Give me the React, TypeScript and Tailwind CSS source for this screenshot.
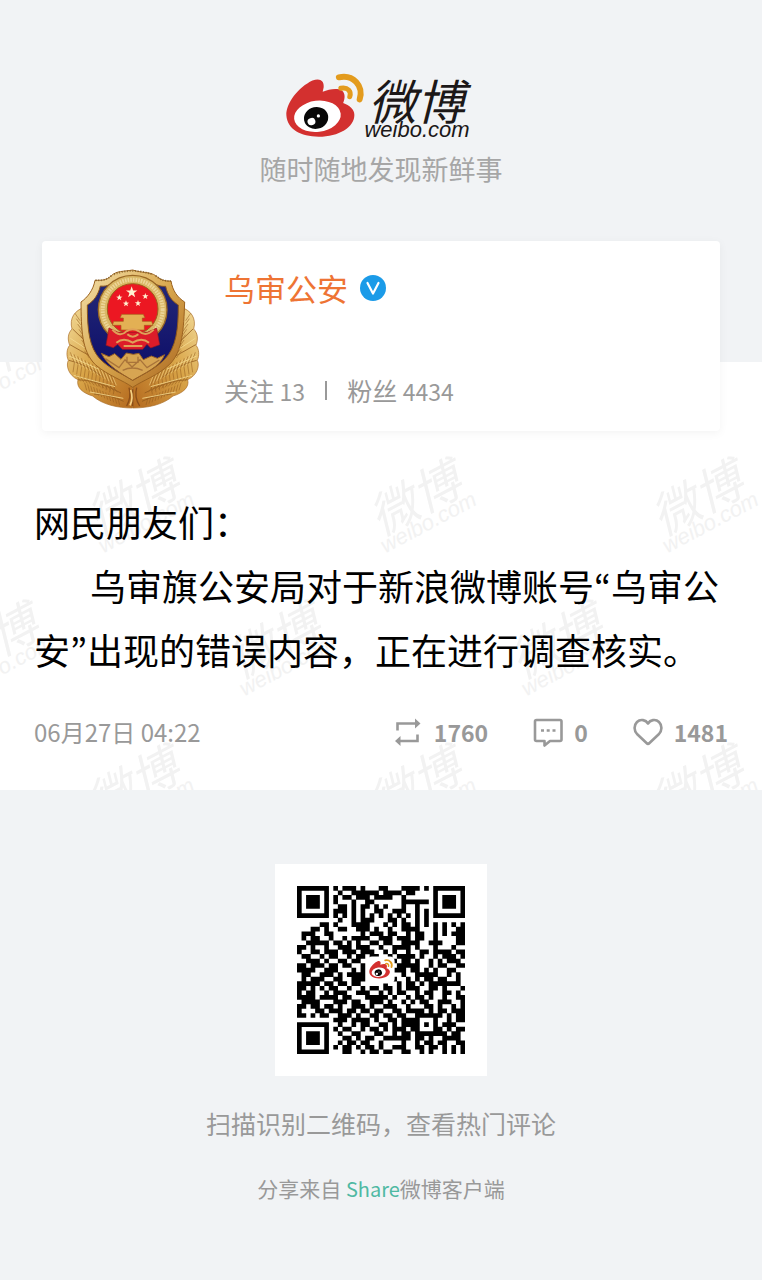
const QR_ROWS = [
  '1111111010111010001100011110101111111',
  '1000001001001111110111101100001000001',
  '1011101010110111011110010000001011101',
  '1011101010001001100000011111101011101',
  '1011101001101011010100010010001011101',
  '1000001011101010011001110010101000001',
  '1111111010101010101010101010101111111',
  '0000000001001011100011010010100000000',
  '0000011010001111000101011010101010101',
  '0001101001100111010010011110001010011',
  '0111001100000010111011001011001010111',
  '0101100100101111001110111011001000011',
  '0011111011010100110110011110011100011',
  '1101001001110111001001111010001000100',
  '1001101110111011100101001001101111011',
  '0110010110010110110010111101001011101',
  '0011101001101100000011011010010101110',
  '1101110110110010000010111110010110011',
  '1111001110001010000001110110101001100',
  '0110011101011110000010010011111001010',
  '0101110011001110000001001010110110010',
  '1111101101101100000100101101011111110',
  '1101010110010010110110101110011010001',
  '1011001011100111001010110010110011010',
  '1111011110110001111101001011010010011',
  '0111100011101100111010010101100111001',
  '1101101101001110100111001000110100101',
  '1000110111011011011001101111010110111',
  '1101011001110100110110110011111101011',
  '0000000011101111010011011110001001011',
  '1111111001001011001101011110101011100',
  '1000001010110010110101110110001101011',
  '1011101001001100011001011011111110110',
  '1011101000110101100111111011010011110',
  '1011101001011011001000010010110110011',
  '1000001010110101101001110011011010101',
  '1111111000110010110110011001010010101',
];

const qrPath = QR_ROWS.map((row, y) =>
  row
    .split('')
    .map((cell, x) => (cell === '1' ? `M${x} ${y}h1.03v1.03h-1.03z` : ''))
    .join(''),
).join('');

function EyeMark({ className }: { className: string }) {
  return (
    <svg viewBox="0 0 240 200" className={className} aria-hidden="true">
      <path
        d="M3 120C1 82 40 34 82 14C103 5 118 13 116 34L113 48C132 40 157 36 171 44C182 52 181 68 175 82C194 89 209 101 209 118C209 155 162 184 101 184C46 184 6 161 3 120Z"
        fill="#d3302f"
      />
      <ellipse cx="97" cy="122" rx="71" ry="47" fill="#fff" transform="rotate(-7 97 122)" />
      <ellipse cx="93" cy="127" rx="37" ry="33" fill="#080808" transform="rotate(-12 93 127)" />
      <ellipse cx="79" cy="138" rx="12" ry="11" fill="#fff" transform="rotate(-20 79 138)" />
      <circle cx="100" cy="121" r="5" fill="#fff" />
      <g fill="none" stroke="#e39b1d" strokeLinecap="round">
        <path d="M162 4C205-6 238 30 225 71" strokeWidth="18" />
        <path d="M168 37C189 33 201 46 195 63" strokeWidth="15" />
      </g>
    </svg>
  );
}

function Wordmark() {
  return (
    <span className="flex flex-col whitespace-nowrap italic">
      <span className="pl-1 font-['Noto_Sans_CJK_SC',sans-serif] text-[48px] leading-[42px]">
        微博
      </span>
      <span className="font-['Liberation_Sans',sans-serif] text-[22px] leading-5">weibo.com</span>
    </span>
  );
}

function Feathers() {
  const veins = Array.from({ length: 12 }, (_, i) => i);
  return (
    <g>
      <path
        d="M103 172C75 181 57 204 66 237C52 252 53 269 59 286C49 298 49 318 55 331C47 347 56 377 84 389C78 412 98 429 128 438C158 464 203 474 248 474V385L120 250Z"
        fill="url(#gold)"
        stroke="#a86a23"
        strokeWidth="2"
      />
      <g fill="none" stroke="#8f571b" strokeWidth="3" opacity=".75">
        <path d="M68 237Q91 260 119 285M60 284Q91 302 126 321M57 331Q112 344 158 381M84 389Q143 391 213 429M132 432Q180 434 221 454" />
        {veins.map((i) => (
          <path
            key={i}
            d={`M${73 + i * 11} ${338 + i * 6}l-12-31M${73 + i * 11} ${339 + i * 6}l-4 28`}
            strokeWidth="2"
          />
        ))}
        {veins.map((i) => (
          <path key={i} d={`M${92 + i * 10} ${394 + i * 3}l-13-19M${104 + i * 9} ${399 + i * 4}l6 22`} strokeWidth="2" />
        ))}
        {veins.slice(0, 8).map((i) => (
          <path key={i} d={`M${75 + i * 4} ${190 + i * 16}l15 22`} strokeWidth="2" />
        ))}
      </g>
      <g fill="none" stroke="#f7dd92" strokeWidth="3" opacity=".8">
        <path d="M77 212L108 242M61 265L116 301M57 318L145 357M71 376L195 410M120 426L220 445" />
        {veins.map((i) => (
          <path key={i} d={`M${78 + i * 11} ${340 + i * 6}l-12-29`} strokeWidth="2" />
        ))}
      </g>
    </g>
  );
}

const STAR = 'M0-10L2.4-3.2L9.5-3.1L3.8 1.3L5.9 8.1L0 4L-5.9 8.1L-3.8 1.3L-9.5-3.1L-2.4-3.2Z';

function PoliceBadge() {
  return (
    <svg viewBox="0 0 510 510" className="size-[170px] shrink-0" role="img" aria-label="乌审公安">
      <defs>
        <linearGradient id="gold" x1="0" y1="0" x2="1" y2="1">
          <stop offset="0" stopColor="#f3dc9b" />
          <stop offset=".45" stopColor="#d9a548" />
          <stop offset="1" stopColor="#b4691e" />
        </linearGradient>
        <linearGradient id="rim" x1="0" y1="0" x2="1" y2="1">
          <stop offset="0" stopColor="#f4e2ad" />
          <stop offset=".5" stopColor="#d9a74d" />
          <stop offset="1" stopColor="#a8641f" />
        </linearGradient>
        <linearGradient id="navy" x1="0" y1="0" x2="0" y2="1">
          <stop offset="0" stopColor="#252a78" />
          <stop offset="1" stopColor="#0b0b67" />
        </linearGradient>
      </defs>
      <Feathers />
      <g transform="translate(497 0) scale(-1 1)">
        <Feathers />
      </g>
      <path
        d="M248 60C220 65 200 62 184 77C169 92 153 91 135 91C130 120 112 143 93 156C94 237 94 302 136 344C175 378 218 390 248 412C280 390 322 378 359 343C398 304 401 237 404 156C383 143 368 123 363 93C341 94 331 88 317 77C300 65 275 69 248 60Z"
        fill="url(#rim)"
        stroke="#9b621f"
        strokeWidth="3"
      />
      <path
        d="M248 80C224 85 207 82 192 95C178 107 164 110 151 108C145 134 132 153 112 165C112 237 117 292 151 328C181 358 218 372 248 391C281 372 316 356 344 328C379 292 385 237 385 165C365 153 352 134 347 109C329 110 317 104 304 94C286 82 268 87 248 80Z"
        fill="url(#navy)"
        stroke="#8c571c"
        strokeWidth="3"
      />
      <path
        d="M154 310L177 320L194 311L213 328L229 309L250 313L267 310L280 329L304 318L322 325L344 314C330 351 282 370 248 391C214 371 173 349 154 310Z"
        fill="#d7a552"
        stroke="#996024"
        strokeWidth="3"
      />
      <path
        d="M166 326L207 353L225 329L246 351L270 329L291 353L328 330M218 361Q247 347 278 361M231 320V337H264V320"
        fill="none"
        stroke="#a9743a"
        strokeWidth="4"
      />
      <path
        d="M184 77C169 92 153 91 135 91M317 77C331 88 341 94 363 93M192 73Q248 52 309 74"
        fill="none"
        stroke="#725018"
        strokeWidth="6"
        strokeDasharray="3 5"
        opacity=".65"
      />
      <circle cx="248" cy="179" r="103" fill="#d9b765" stroke="#9a6825" strokeWidth="4" />
      <circle cx="248" cy="179" r="90" fill="none" stroke="#ecd598" strokeWidth="12" strokeDasharray="5 3" />
      <circle cx="248" cy="177" r="76" fill="#ec1722" stroke="#9c601b" strokeWidth="3" />
      <g fill="#fff1d0">
        <path d={STAR} transform="translate(245 127) scale(1.8)" />
        <path d={STAR} transform="translate(208 143) scale(1)" />
        <path d={STAR} transform="translate(286 139) scale(1)" />
        <path d={STAR} transform="translate(228 161) scale(1)" />
        <path d={STAR} transform="translate(264 160) scale(1)" />
      </g>
      <path
        d="M215 193H280L285 204H277V214H305L309 226H283V240H213V226H187L191 214H220V204H210Z"
        fill="#e3b054"
        stroke="#a65a18"
        strokeWidth="2"
      />
      <path
        d="M177 234L204 247H292L320 234L329 284L302 294L291 283L278 298H217L203 283L190 293L168 286Z"
        fill="#dc1c29"
        stroke="#97161e"
        strokeWidth="2"
      />
      <path
        d="M187 239Q210 264 229 244Q248 231 267 244Q288 262 311 239M199 278Q221 260 248 278Q275 260 297 278M232 253Q248 267 265 253M221 288H277"
        fill="none"
        stroke="#e0a058"
        strokeWidth="6"
      />
      <path d="M237 413Q245 442 230 468M260 413Q252 442 269 468M248 418V469" fill="none" stroke="#8a4d18" strokeWidth="4" />
      <path d="M242 420Q251 445 240 466" fill="none" stroke="#f5d184" strokeWidth="5" />
    </svg>
  );
}

const WATERMARKS = [
  [-57, -47],
  [84, 95],
  [366, 95],
  [648, 95],
  [-57, 238],
  [225, 238],
  [507, 238],
  [84, 381],
  [366, 381],
  [648, 381],
];

function Watermarks() {
  return (
    <div className="pointer-events-none absolute inset-0 overflow-hidden text-[#f2f2f2]" aria-hidden="true">
      {WATERMARKS.map(([left, top]) => (
        <div key={`${left}/${top}`} className="absolute py-4" style={{ left, top }}>
          <div className="-rotate-[28deg]">
            <Wordmark />
          </div>
        </div>
      ))}
    </div>
  );
}

const iconClass = 'h-8 w-8 fill-none stroke-[#999] stroke-[2.6]';

function RepostIcon() {
  return (
    <svg viewBox="0 0 32 32" className={iconClass} aria-hidden="true">
      <path d="M5.500 14.500V7.500H24M25.500 18.500V25H8" />
      <path d="M23 2.500L28.500 7.500L23 12.500ZM8.500 20L3 25L8.500 30Z" fill="#999" stroke="none" />
    </svg>
  );
}

function CommentIcon() {
  return (
    <svg viewBox="0 0 32 32" className={iconClass} aria-hidden="true">
      <path d="M4.500 4H28Q29.500 4 29.500 5.500V23.500Q29.500 25 28 25H18L12.500 29.500V25H4.500Q3 25 3 23.500V5.500Q3 4 4.500 4Z" strokeLinejoin="round" />
      <path d="M9 14.500H12M14.700 14.500H17.700M20.500 14.500H23.500" />
    </svg>
  );
}

function HeartIcon() {
  return (
    <svg viewBox="0 0 32 32" className={iconClass} aria-hidden="true">
      <path
        d="M16 7.500C14 4 8.500 2.500 5 6C1.500 9.500 2 14.500 5 18L14.500 27Q16 28.500 17.500 27L27 18C30 14.500 30.500 9.500 27 6C23.500 2.500 18 4 16 7.500Z"
        strokeLinejoin="round"
      />
    </svg>
  );
}

function Quote({ mark }: { mark: string }) {
  return <span className="font-['Noto_Sans_CJK_KR',sans-serif]">{mark}</span>;
}

export default function App() {
  return (
    <main className="min-h-screen bg-[#f1f3f5] font-['Noto_Sans_CJK_SC',sans-serif] text-[#999]">
      <header className="flex flex-col items-center pt-[72px]">
        <h1 className="flex items-start pr-2 text-[#1c1818]">
          <EyeMark className="mt-[4px] mr-[-2px] h-[66px] w-[82px] overflow-visible" />
          <span className="pt-[6px]">
            <Wordmark />
          </span>
        </h1>
        <p className="mt-[7px] text-[27px] leading-[40px] text-[#a6a6a6]">随时随地发现新鲜事</p>
      </header>

      <section className="relative z-10 mx-[42px] mt-[52px] flex rounded-sm bg-white pt-[9px] pr-4 pb-[11px] pl-2 shadow-[0_2px_10px_rgba(0,0,0,0.05)]">
        <PoliceBadge />
        <div className="flex flex-1 flex-col justify-between pt-[15px] pb-[11px] pl-1">
          <h2 className="flex items-center gap-3 text-[31px] leading-[46px] text-[#ee7434]">
            乌审公安
            <svg viewBox="0 0 26 26" className="size-[26px]" role="img" aria-label="已认证">
              <circle cx="13" cy="13" r="13" fill="#1b9be8" />
              <path d="M7.500 8L13 18.500L18.500 8" fill="none" stroke="#fff" strokeWidth="2.200" strokeLinecap="round" strokeLinejoin="round" />
            </svg>
          </h2>
          <p className="flex items-center text-[25px] leading-9">
            <span>
              关注 <span className="text-[23px]">13</span>
            </span>
            <span className="mx-5 h-[19px] w-[2px] bg-[#999]" />
            <span>
              粉丝 <span className="text-[23px]">4434</span>
            </span>
          </p>
        </div>
      </section>

      <article className="relative -mt-[69px] bg-white px-[34px] pt-[127px] pb-[40px]">
        <Watermarks />
        <div className="relative text-[36px] leading-[64px] text-black">
          <p>网民朋友们：</p>
          <p className="indent-[56px]">
            乌审旗公安局对于新浪微博账号
            <Quote mark="“" />
            乌审公安
            <Quote mark="”" />
            出现的错误内容，正在进行调查核实。
          </p>
        </div>
        <footer className="relative mt-[33px] flex items-center justify-between text-2xl leading-9">
          <time>06月27日 04:22</time>
          <div className="flex items-center gap-[44px] text-[23px] font-bold">
            <button className="flex items-center gap-[10px]" aria-label="转发 1760">
              <RepostIcon />
              1760
            </button>
            <button className="flex items-center gap-[10px]" aria-label="评论 0">
              <CommentIcon />0
            </button>
            <button className="flex items-center gap-[10px]" aria-label="赞 1481">
              <HeartIcon />
              1481
            </button>
          </div>
        </footer>
      </article>

      <section className="flex flex-col items-center pt-[74px] pb-[70px]">
        <div className="relative bg-white p-[22px]">
          <svg viewBox="0 0 37 37" className="size-[168px]" role="img" aria-label="二维码">
            <path d={qrPath} />
            <rect x="15.500" y="15.500" width="6" height="6" rx="1" fill="#fff" />
          </svg>
          <div className="absolute inset-0 flex items-center justify-center">
            <EyeMark className="h-5 w-6 overflow-visible" />
          </div>
        </div>
        <p className="mt-[28px] text-[25px] leading-[38px]">扫描识别二维码，查看热门评论</p>
        <p className="mt-[31px] text-[21px] leading-[30px]">
          分享来自 <a href="#share" className="text-[20px] text-[#4fb9a3]">Share</a>微博客户端
        </p>
      </section>
    </main>
  );
}
